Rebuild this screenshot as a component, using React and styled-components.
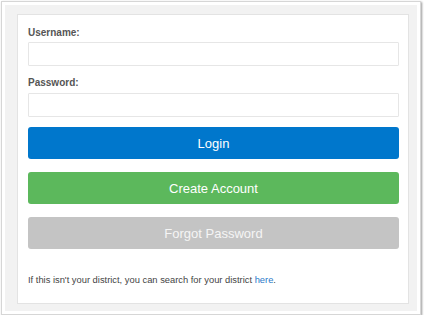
import React from 'react';
import styled, { createGlobalStyle } from 'styled-components';

const GlobalStyle = createGlobalStyle`
    html, body {
        margin: 0;
        padding: 0;
        background: #fff;
    }
    body {
        font-family: 'Liberation Sans', Arial, Helvetica, sans-serif;
    }
`;

/* The screenshot frame around the page */
const Frame = styled.div`
    margin: 1px 0 0 1px;
    width: 412px;
    padding: 3px;
    background: #fff;
    border: 1px solid #d6d6d6;
    box-shadow: 1px 1px 2px rgba(0, 0, 0, 0.4);
`;

const Panel = styled.div`
    background: #f2f2f2;
    padding: 9px 8px 7px 12px;
`;

const Card = styled.form`
    background: #fff;
    border: 1px solid #e3e3e3;
    padding: 12px 9px 17px 10px;
    display: flex;
    flex-direction: column;
`;

const Label = styled.label`
    display: block;
    font-size: 10px;
    line-height: 12px;
    font-weight: bold;
    color: #555;
    margin-bottom: ${({ gap }) => gap}px;
`;

const Input = styled.input`
    box-sizing: border-box;
    width: 100%;
    height: 24px;
    border: 1px solid #e6e6e6;
    border-radius: 1px;
    background: #fff;
    margin: 0 0 ${({ after }) => after}px 0;
    padding: 0 6px;
    outline: none;
`;

const Button = styled.button`
    box-sizing: border-box;
    width: 100%;
    height: 32px;
    border: none;
    border-radius: 3px;
    background: ${({ bg }) => bg};
    color: ${({ fg }) => fg || '#fff'};
    font-family: 'Liberation Sans', Arial, sans-serif;
    font-size: 13px;
    margin-bottom: ${({ after }) => after || 0}px;
    cursor: pointer;
`;

const Note = styled.p`
    margin: 25px 0 0 0;
    font-size: 9.35px;
    line-height: 12px;
    color: #444;
`;

const Link = styled.a`
    color: #2a7ac9;
    text-decoration: none;
`;

export default function App() {
    return (
        <>
            <GlobalStyle />
            <Frame>
                <Panel>
                    <Card onSubmit={(e) => e.preventDefault()}>
                        <Label gap={3}>Username:</Label>
                        <Input type="text" after={11} />
                        <Label gap={4}>Password:</Label>
                        <Input type="password" after={10} />
                        <Button bg="#0077cc" after={13}>Login</Button>
                        <Button bg="#5cb85c" after={13}>Create Account</Button>
                        <Button bg="#c4c4c4" fg="#f5f5f5">Forgot Password</Button>
                        <Note>
                            If this isn't your district, you can search for your district <Link href="#">here</Link>.
                        </Note>
                    </Card>
                </Panel>
            </Frame>
        </>
    );
}
